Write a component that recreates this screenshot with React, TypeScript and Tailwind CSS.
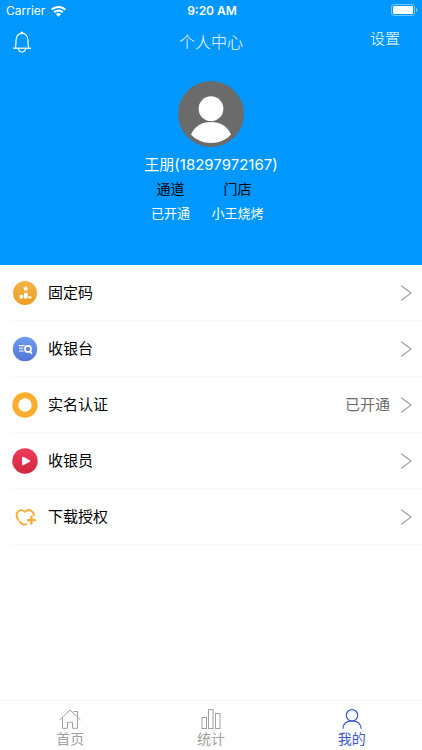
import type { ReactNode } from "react";

type MenuItem = {
  label: string;
  icon: ReactNode;
  value?: string;
};

function WifiIcon() {
  return (
    <svg width="15" height="11" viewBox="0 0 15 11" fill="#fff" aria-hidden="true">
      <path d="M7.5 0C10.4 0 13 1.1 15 3L13.6 4.5C12 3 9.9 2.1 7.5 2.1S3 3 1.4 4.5L0 3C2 1.1 4.6 0 7.5 0Z" />
      <path d="M7.5 3.6C9.4 3.6 11.2 4.3 12.5 5.6L11.1 7.1C10.1 6.2 8.9 5.7 7.5 5.7S4.9 6.2 3.9 7.1L2.5 5.6C3.8 4.3 5.6 3.6 7.5 3.6Z" />
      <path d="M7.5 7.1C8.5 7.1 9.4 7.5 10 8.2L7.5 10.8L5 8.2C5.6 7.5 6.5 7.1 7.5 7.1Z" />
    </svg>
  );
}

function BatteryIcon() {
  return (
    <svg width="27" height="12" viewBox="0 0 27 12" aria-hidden="true">
      <rect x="0.5" y="0.5" width="23" height="11" rx="2.5" fill="none" stroke="#fff" strokeOpacity="0.45" />
      <rect x="2" y="2" width="20" height="8" rx="1.2" fill="#fff" />
      <path d="M25 4C26 4.4 26.4 5.1 26.4 6S26 7.6 25 8Z" fill="#fff" fillOpacity="0.5" />
    </svg>
  );
}

function BellIcon() {
  return (
    <svg width="20" height="22" viewBox="0 0 20 22" fill="none" stroke="#fff" strokeWidth="1.2" aria-hidden="true">
      <path d="M1 17.2H19" />
      <path d="M3.3 17C4 15.4 4 13.5 4 9.5C4 5.3 6.3 2.3 10 2.3S16 5.3 16 9.5C16 13.5 16 15.4 16.7 17" />
      <path d="M9 2.2C9 0.8 11 0.8 11 2.2" />
      <path d="M6.2 17.4C6.7 19.8 8.1 21 10 21S13.3 19.8 13.8 17.4" />
    </svg>
  );
}

function Avatar() {
  return (
    <svg width="66" height="66" viewBox="0 0 66 66" role="img" aria-label="头像">
      <circle cx="33" cy="33" r="33" fill="#6b6b6b" />
      <circle cx="33" cy="27.7" r="12.4" fill="#fff" />
      <path d="M13 53.5C16.5 45.5 23.5 41 33 41S49.5 45.5 53 53.5C48 59 41 62 33 62S18 59 13 53.5Z" fill="#fff" />
    </svg>
  );
}

function CodeIcon() {
  return (
    <svg width="26" height="26" viewBox="0 0 26 26" aria-hidden="true">
      <defs>
        <linearGradient id="code-fill" x1="0" y1="0" x2="0" y2="1">
          <stop offset="0" stopColor="#f2b446" />
          <stop offset="1" stopColor="#ef9d25" />
        </linearGradient>
      </defs>
      <circle cx="13" cy="13" r="12" fill="url(#code-fill)" />
      <path d="M13.7 5.8L14.6 7.6L16.5 7.8L15.1 9.2L15.4 11.1L13.7 10.2L12 11.1L12.3 9.2L10.9 7.8L12.8 7.6Z" fill="#fff" />
      <rect x="7.6" y="14.8" width="3.6" height="3.8" rx="0.8" fill="#fff" />
      <rect x="12" y="12.7" width="3.7" height="5.9" rx="0.8" fill="#fff" />
      <rect x="16.3" y="16.2" width="3.2" height="2.4" rx="0.8" fill="#fff" />
    </svg>
  );
}

function CashierDeskIcon() {
  return (
    <svg width="26" height="26" viewBox="0 0 26 26" fill="none" stroke="#fff" aria-hidden="true">
      <defs>
        <linearGradient id="desk-fill" x1="0" y1="0" x2="0" y2="1">
          <stop offset="0" stopColor="#6f9bf0" />
          <stop offset="1" stopColor="#5275d6" />
        </linearGradient>
      </defs>
      <circle cx="13" cy="13" r="12.2" fill="url(#desk-fill)" stroke="none" />
      <path d="M7 9.6H12.6M7 12.3H11.2M7 15H11.6" strokeWidth="1.1" />
      <circle cx="16" cy="12.9" r="3.1" strokeWidth="1.7" />
      <path d="M18.2 15.4L19.6 17.4" strokeWidth="1.7" strokeLinecap="round" />
    </svg>
  );
}

function RingIcon() {
  return (
    <svg width="26" height="26" viewBox="0 0 26 26" aria-hidden="true">
      <circle cx="13" cy="13" r="9.7" fill="none" stroke="#ffad2e" strokeWidth="6" />
    </svg>
  );
}

function PlayIcon() {
  return (
    <svg width="26" height="26" viewBox="0 0 26 26" aria-hidden="true">
      <defs>
        <linearGradient id="play-fill" x1="0" y1="0" x2="0" y2="1">
          <stop offset="0" stopColor="#f03a5c" />
          <stop offset="1" stopColor="#d3283f" />
        </linearGradient>
      </defs>
      <circle cx="13" cy="13" r="12.7" fill="url(#play-fill)" />
      <path d="M10.9 9.6V16.4L17.3 13Z" fill="#fff" stroke="#fff" strokeWidth="1.8" strokeLinejoin="round" />
    </svg>
  );
}

function HeartPlusIcon() {
  return (
    <svg width="26" height="26" viewBox="0 0 26 26" fill="none" stroke="#fbab32" strokeLinecap="round" aria-hidden="true">
      <path
        d="M14.2 20.2C12.4 21 10.600 20.400 9.200 19.200L7.400 17.400M6.300 15.600C3.900 12.900 4.100 9.100 6.400 7.200C8.500 5.600 11 6 13 7.700C15 6 17.700 5.600 19.700 7.200C21.100 8.300 21.700 9.700 21.600 11.300"
        strokeWidth="1.9"
      />
      <path d="M19.4 12.700V19.700M15.900 16.200H22.900" strokeWidth="2.300" />
    </svg>
  );
}

function Chevron() {
  return (
    <svg width="12" height="18" viewBox="0 0 12 18" fill="none" stroke="#a3a3a3" strokeWidth="1.3" aria-hidden="true">
      <path d="M1 1.5L11 9L1 16.5" />
    </svg>
  );
}

function HomeIcon() {
  return (
    <svg width="22" height="20" viewBox="0 0 22 20" fill="none" stroke="currentColor" aria-hidden="true">
      <path d="M0.5 11L11 1L21.5 11" />
      <path d="M3.5 9V19.3H8.5V13.3H13.5V19.3H18.5V9" />
      <path d="M14.5 2.5H18.5V7.5" />
    </svg>
  );
}

function ChartIcon() {
  return (
    <svg width="20" height="20" viewBox="0 0 20 20" fill="none" stroke="currentColor" aria-hidden="true">
      <rect x="1" y="8.5" width="4.5" height="11" />
      <rect x="7.5" y="0.5" width="4.5" height="19" />
      <rect x="14.5" y="4.5" width="4.5" height="15" />
    </svg>
  );
}

function UserIcon() {
  return (
    <svg width="20" height="20" viewBox="0 0 20 20" fill="none" stroke="currentColor" strokeWidth="1.2" aria-hidden="true">
      <circle cx="10" cy="6.3" r="5.7" />
      <path d="M0.8 19.8C1.3 14.8 5 11.9 10 11.9S18.7 14.8 19.2 19.8" />
    </svg>
  );
}

const menu: MenuItem[] = [
  { label: "固定码", icon: <CodeIcon /> },
  { label: "收银台", icon: <CashierDeskIcon /> },
  { label: "实名认证", icon: <RingIcon />, value: "已开通" },
  { label: "收银员", icon: <PlayIcon /> },
  { label: "下载授权", icon: <HeartPlusIcon /> },
];

const tabs = [
  { label: "首页", icon: <HomeIcon />, active: false },
  { label: "统计", icon: <ChartIcon />, active: false },
  { label: "我的", icon: <UserIcon />, active: true },
];

export default function App() {
  return (
    <div className="flex min-h-screen flex-col bg-white font-['Inter','Noto_Sans_CJK_SC',sans-serif] text-black">
      <header className="bg-[#0097ff] pb-10 text-white">
        <div className="grid h-5 grid-cols-3 items-center pr-1 pl-1.5 text-xs">
          <div className="flex items-center gap-1.5 pt-0.5">
            <span>Carrier</span>
            <WifiIcon />
          </div>
          <span className="pt-0.5 text-center font-semibold">9:20 AM</span>
          <span className="flex justify-end">
            <BatteryIcon />
          </span>
        </div>

        <nav className="grid h-11 grid-cols-3 items-center px-3">
          <button type="button" aria-label="消息" className="justify-self-start">
            <BellIcon />
          </button>
          <h1 className="text-center text-base font-light">个人中心</h1>
          <button type="button" className="justify-self-end pr-2.5 pb-1.5 text-[15px] font-light">
            设置
          </button>
        </nav>

        <section className="flex flex-col items-center pt-[17px]">
          <Avatar />
          <p className="mt-1.5 text-[15px] leading-6">王朋(18297972167)</p>
          <dl className="mr-3.5 grid grid-cols-2 text-center">
            <div className="w-[67px]">
              <dt className="text-sm leading-6 text-black">通道</dt>
              <dd className="text-[13px] leading-6">已开通</dd>
            </div>
            <div className="w-[67px]">
              <dt className="text-sm leading-6 text-black">门店</dt>
              <dd className="text-[13px] leading-6">小王烧烤</dd>
            </div>
          </dl>
        </section>
      </header>

      <main className="flex-1 font-['Noto_Sans_CJK_SC',sans-serif]">
        <ul className="pl-3">
          {menu.map((item) => (
            <li key={item.label} className="border-b border-[#f6f6f6]">
              <button type="button" className="flex h-[55px] w-full items-center pr-2.5 text-left">
                {item.icon}
                <span className="ml-2.5 flex-1 text-[15px]">{item.label}</span>
                {item.value && <span className="mr-2.5 text-[15px] text-[#6b6b6b]">{item.value}</span>}
                <Chevron />
              </button>
            </li>
          ))}
        </ul>
      </main>

      <nav className="grid h-[50px] grid-cols-3 border-t border-[#f6f6f6]">
        {tabs.map((tab) => (
          <a
            key={tab.label}
            href="#"
            aria-current={tab.active ? "page" : undefined}
            className={`flex flex-col items-center pt-2 text-sm ${tab.active ? "text-[#3a57d0]" : "text-[#a0a0a0]"}`}
          >
            {tab.icon}
            <span>{tab.label}</span>
          </a>
        ))}
      </nav>
    </div>
  );
}
